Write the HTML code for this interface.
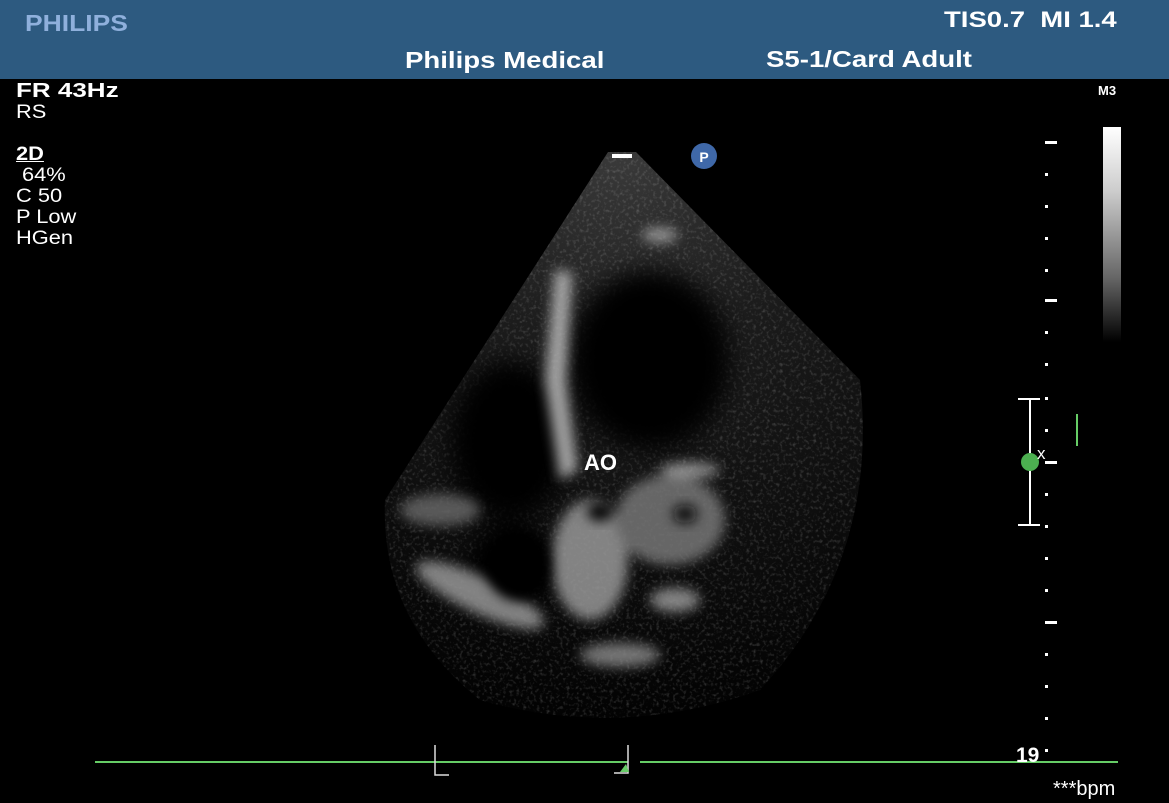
<!DOCTYPE html>
<html><head><meta charset="utf-8"><style>
body{margin:0;width:1169px;height:803px;background:#000;overflow:hidden;position:relative;font-family:"Liberation Sans",Arial,sans-serif;color:#fff}
.hdr{position:absolute;left:0;top:0;width:1169px;height:79px;background:#2d5a80}
.t{position:absolute;font-weight:bold;white-space:nowrap;transform-origin:0 0}
.l{position:absolute;font-size:19px;line-height:21px;white-space:nowrap;transform-origin:0 0;transform:scaleX(1.15)}
</style></head><body>
<div class="hdr"></div>
<div class="t" style="left:25px;top:10px;font-size:23px;color:#8fb0dc;transform:scaleX(1.15)">PHILIPS</div>
<div class="t" style="left:944px;top:7px;font-size:22px;transform:scaleX(1.25)">TIS0.7&nbsp;&nbsp;MI 1.4</div>
<div class="t" style="left:405px;top:47px;font-size:23px;transform:scaleX(1.2)">Philips Medical</div>
<div class="t" style="left:766px;top:46px;font-size:23px;transform:scaleX(1.2)">S5-1/Card Adult</div>
<div class="l" style="left:16px;top:81px;font-weight:bold;font-size:20px;transform:scaleX(1.3)">FR 43Hz</div>
<div class="l" style="left:16px;top:102px">RS</div>
<div class="l" style="left:16px;top:144px;font-weight:bold;text-decoration:underline">2D</div>
<div class="l" style="left:22px;top:165px">64%</div>
<div class="l" style="left:16px;top:186px">C 50</div>
<div class="l" style="left:16px;top:207px">P Low</div>
<div class="l" style="left:16px;top:228px">HGen</div>
<div class="t" style="left:1098px;top:83px;font-size:13px">M3</div>
<div style="position:absolute;left:1103px;top:127px;width:18px;height:215px;background:linear-gradient(#fff,#ccc 30%,#666 70%,#000)"></div>
<svg width="1169" height="803" style="position:absolute;left:0;top:0">
<defs>
<filter id="b" x="-50%" y="-50%" width="200%" height="200%"><feGaussianBlur stdDeviation="12"/></filter>
<filter id="b2" x="-50%" y="-50%" width="200%" height="200%"><feGaussianBlur stdDeviation="6"/></filter>
<filter id="n"><feTurbulence type="fractalNoise" baseFrequency="0.3" numOctaves="2" seed="3"/><feColorMatrix values="0 0 0 0 1 0 0 0 0 1 0 0 0 0 1 0 0 0 1.8 -0.9"/></filter>
<clipPath id="c"><path d="M608 152 L636 152 L860 380 Q880 560 760 690 Q620 740 480 700 Q380 620 385 500 Z"/></clipPath>
<radialGradient id="g" cx="622" cy="152" r="560" gradientUnits="userSpaceOnUse"><stop offset="0" stop-color="#3a3a3a"/><stop offset=".35" stop-color="#1c1c1c"/><stop offset="1" stop-color="#030303"/></radialGradient>
</defs>
<g clip-path="url(#c)">
<rect x="380" y="150" width="500" height="600" fill="url(#g)"/>
<rect x="380" y="150" width="500" height="600" filter="url(#n)" opacity=".25"/>
<g filter="url(#b)">
<ellipse cx="510" cy="440" rx="60" ry="80" fill="#000"/>
<ellipse cx="650" cy="360" rx="80" ry="90" fill="#050505"/>
<ellipse cx="510" cy="565" rx="40" ry="40" fill="#000"/>
</g>
<g filter="url(#b2)" opacity=".85">
<path d="M555 270 L572 272 L566 380 L578 470 L560 480 L545 380 Z" fill="#bbb"/>
<ellipse cx="590" cy="560" rx="38" ry="60" fill="#999"/>
<ellipse cx="670" cy="520" rx="55" ry="45" fill="#777"/>
<ellipse cx="480" cy="595" rx="70" ry="18" fill="#999" transform="rotate(25 480 595)"/>
<ellipse cx="440" cy="510" rx="40" ry="16" fill="#666"/>
<ellipse cx="620" cy="655" rx="40" ry="12" fill="#888"/>
<ellipse cx="675" cy="600" rx="25" ry="12" fill="#999"/>
<ellipse cx="660" cy="235" rx="18" ry="7" fill="#aaa"/>
<ellipse cx="690" cy="470" rx="30" ry="7" fill="#aaa"/>
</g>
<ellipse cx="600" cy="512" rx="13" ry="9" fill="#000" filter="url(#b2)"/>
<ellipse cx="518" cy="565" rx="32" ry="36" fill="#000" filter="url(#b2)"/>
<ellipse cx="685" cy="514" rx="12" ry="9" fill="#111" filter="url(#b2)"/>
</g>
<path d="M612 156 h20" stroke="#fff" stroke-width="4"/>
<circle cx="704" cy="156" r="13" fill="#3f68a8"/>
<text x="704" y="162" fill="#fff" font-size="14" font-weight="bold" text-anchor="middle" font-family="Liberation Sans">P</text>
<text x="584" y="470" fill="#fff" font-size="22" font-weight="bold" font-family="Liberation Sans">AO</text>
<g fill="#fff">
<rect x="1045" y="141" width="12" height="3"/><rect x="1045" y="299" width="12" height="3"/><rect x="1045" y="461" width="12" height="3"/><rect x="1045" y="621" width="12" height="3"/>
<rect x="1045" y="173" width="3" height="3"/><rect x="1045" y="205" width="3" height="3"/><rect x="1045" y="237" width="3" height="3"/><rect x="1045" y="269" width="3" height="3"/>
<rect x="1045" y="331" width="3" height="3"/><rect x="1045" y="363" width="3" height="3"/><rect x="1045" y="397" width="3" height="3"/><rect x="1045" y="429" width="3" height="3"/>
<rect x="1045" y="493" width="3" height="3"/><rect x="1045" y="525" width="3" height="3"/><rect x="1045" y="557" width="3" height="3"/><rect x="1045" y="589" width="3" height="3"/>
<rect x="1045" y="653" width="3" height="3"/><rect x="1045" y="685" width="3" height="3"/><rect x="1045" y="717" width="3" height="3"/><rect x="1045" y="749" width="3" height="3"/>
</g>
<path d="M1018 399 h22 M1030 399 v126 M1018 525 h22" stroke="#fff" stroke-width="2" fill="none"/>
<circle cx="1030" cy="462" r="9" fill="#4caf50"/>
<text x="1037" y="459" fill="#fff" font-size="17" font-family="Liberation Sans">x</text>
<path d="M1077 414 v32" stroke="#6c6" stroke-width="2"/>
<path d="M95 762 H628 M640 762 H1118" stroke="#6c6" stroke-width="2"/>
<path d="M435 745 v30 h14 M628 745 v28 h-14" stroke="#ddd" stroke-width="1.5" fill="none"/>
<path d="M620 772 l6 -8 l3 8z" fill="#6c6"/>
<text x="1016" y="762" fill="#fff" font-size="21" font-weight="bold" font-family="Liberation Sans">19</text>
<text x="1053" y="795" fill="#fff" font-size="20" font-family="Liberation Sans">***bpm</text>
</svg>
</body></html>
